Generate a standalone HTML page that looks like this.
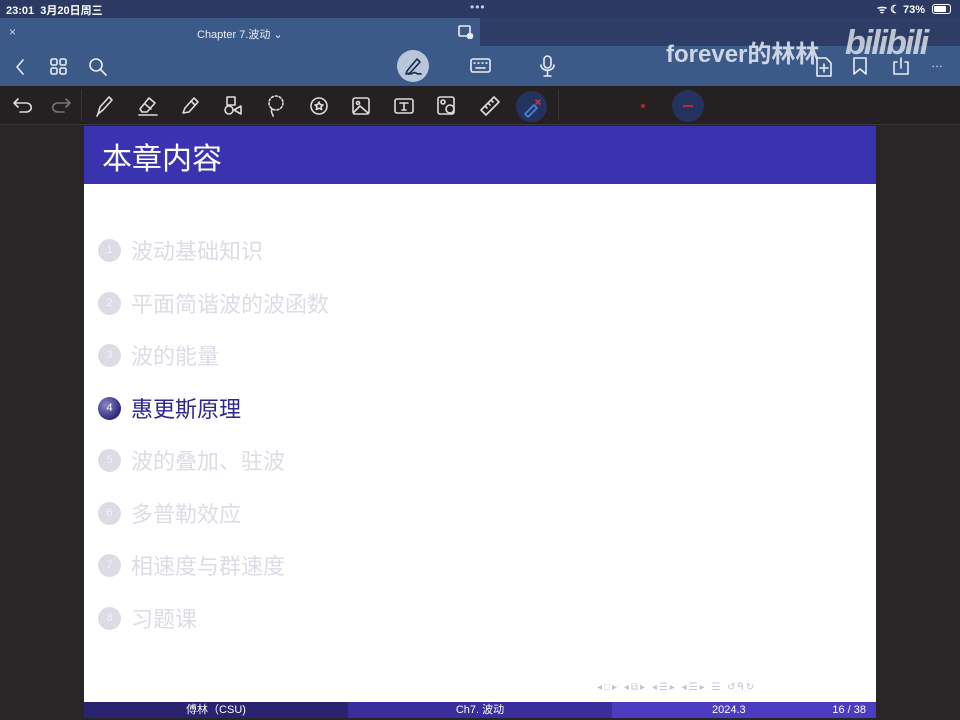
<!DOCTYPE html>
<html><head><meta charset="utf-8"><style>
*{margin:0;padding:0;box-sizing:border-box}
body{width:960px;height:720px;overflow:hidden;background:#2a2627;font-family:"Liberation Sans","Noto Sans CJK SC",sans-serif;position:relative}
.a{position:absolute}
.ic{position:absolute;stroke:#e8ecf4;fill:none;stroke-width:1.6;stroke-linecap:round;stroke-linejoin:round}
.tb{stroke:#dcdcdc}
.item{position:absolute;left:98px;height:28px;display:flex;align-items:center;font-size:22px;color:#dcdce6}
.item .c{width:23px;height:23px;border-radius:50%;background:#dcdce4;color:#f2f2f6;font-size:11px;display:flex;align-items:center;justify-content:center;margin-right:10px}
.item.on{color:#2d2590}
.item.on .c{background:radial-gradient(circle at 35% 35%,#8a86c8,#2d2a78 70%);color:#fff}
</style></head><body>
<div class="a" style="left:0;top:0;width:960px;height:18px;background:#2c3a63"></div>
<div class="a" style="left:6px;top:2px;color:#fff;font-size:11px;font-weight:bold">23:01 &nbsp;3月20日周三</div>
<div class="a" style="left:470px;top:0px;color:#c8cce0;font-size:12px;letter-spacing:1px">•••</div>
<div class="a" style="left:877px;top:2px;color:#fff;font-size:11px;font-weight:bold">ᯤ ☾ 73%</div>
<div class="a" style="left:932px;top:4px;width:19px;height:10px;border:1px solid #fff;border-radius:3px"><div style="width:12px;height:6px;margin:1px;background:#fff;border-radius:1px"></div></div>
<div class="a" style="left:0;top:18px;width:480px;height:28px;background:#3c5a87"></div>
<div class="a" style="left:480px;top:18px;width:480px;height:28px;background:#2e3d66"></div>
<div class="a" style="left:9px;top:25px;color:#c8d2e4;font-size:12px">×</div>
<div class="a" style="left:197px;top:26px;color:#e8ecf4;font-size:11px">Chapter 7.波动 ⌄</div>
<svg class="ic" style="left:458px;top:25px" width="16" height="14" viewBox="0 0 16 14"><rect x="1" y="1" width="11" height="10" rx="1"/><circle cx="12" cy="11" r="2.5" fill="#e8ecf4"/></svg>
<div class="a" style="left:0;top:46px;width:960px;height:40px;background:#3c5a87"></div>
<svg class="ic" style="left:12px;top:58px" width="16" height="18"><path d="M11 2 L5 9 L11 16"/></svg>
<svg class="ic" style="left:50px;top:58px" width="18" height="18"><rect x="1" y="1" width="6" height="6" rx="1.5"/><rect x="10" y="1" width="6" height="6" rx="1.5"/><rect x="1" y="10" width="6" height="6" rx="1.5"/><rect x="10" y="10" width="6" height="6" rx="1.5"/></svg>
<svg class="ic" style="left:88px;top:57px" width="20" height="20"><circle cx="8" cy="8" r="6"/><path d="M12.5 12.5 L18 18"/></svg>
<div class="a" style="left:397px;top:50px;width:32px;height:32px;border-radius:50%;background:#b8c6dc"></div>
<svg class="ic" style="left:402px;top:55px;stroke:#1d2a44" width="22" height="22"><path d="M5 16 L15 4 L18 7 L8 18 L4 19 Z M6 19 C10 20 12 16 14 18 16 20 17 18 19 19"/></svg>
<svg class="ic" style="left:470px;top:58px" width="22" height="16"><rect x="1" y="1" width="19" height="13" rx="2"/><path d="M4 5h1M8 5h1M12 5h1M16 5h1M6 10h9"/></svg>
<svg class="ic" style="left:539px;top:55px" width="18" height="22"><rect x="5" y="1" width="7" height="12" rx="3.5"/><path d="M2 10 C2 17 15 17 15 10 M8.5 16 V21 M5 21 H12"/></svg>
<div class="a" style="left:666px;top:34px;color:#dde3ee;font-size:24px;font-weight:bold;opacity:.9">forever的林林</div>
<div class="a" style="left:845px;top:24px;color:#e2e6ee;font-size:34px;font-weight:bold;font-style:italic;letter-spacing:-2px;opacity:.8">bilibili</div>
<svg class="ic" style="left:815px;top:56px" width="18" height="22"><path d="M2 2h9l5 5v13H2Z M9 8v8M5 12h8"/></svg>
<svg class="ic" style="left:852px;top:56px" width="16" height="20"><path d="M2 2h12v16l-6-5-6 5Z"/></svg>
<svg class="ic" style="left:891px;top:56px" width="20" height="20"><path d="M6 6H3v12h14V6h-3M10 2v10"/></svg>
<div class="a" style="left:931px;top:56px;color:#e8ecf4;font-size:12px">…</div>
<div class="a" style="left:0;top:86px;width:960px;height:39px;background:#252122;border-bottom:1px solid #3a3637"></div>
<div class="a" style="left:81px;top:90px;width:1px;height:31px;background:#3a3637"></div>
<div class="a" style="left:558px;top:90px;width:1px;height:31px;background:#3a3637"></div>
<svg class="ic tb" style="left:12px;top:96px" width="22" height="18"><path d="M6 3 L2 7 L6 11 M2 7 H14 C21 7 21 16 14 16 H8"/></svg>
<svg class="ic tb" style="left:50px;top:96px;stroke:#777" width="22" height="18"><path d="M16 3 L20 7 L16 11 M20 7 H8 C1 7 1 16 8 16 H14"/></svg>
<svg class="ic tb" style="left:94px;top:94px" width="22" height="24"><path d="M4 20 L6 13 L15 3 L18 6 L9 16 Z M4 20 L3 22"/></svg>
<svg class="ic tb" style="left:136px;top:94px" width="24" height="24"><path d="M4 15 L13 4 L19 9 L11 18 H6 Z M9 10 L15 15 M3 21 H21"/></svg>
<svg class="ic tb" style="left:180px;top:94px" width="22" height="24"><path d="M3 19 L5 14 L14 4 L18 8 L9 18 Z M11 7 L15 11"/></svg>
<svg class="ic tb" style="left:222px;top:94px" width="22" height="24"><rect x="5" y="3" width="8" height="8"/><circle cx="7" cy="16" r="4"/><path d="M19 12 L12 16 L19 20 Z"/></svg>
<svg class="ic tb" style="left:265px;top:94px" width="22" height="24"><circle cx="11" cy="9" r="7" stroke-dasharray="2 2"/><path d="M7 15 C5 19 9 21 8 22"/></svg>
<svg class="ic tb" style="left:307px;top:94px" width="24" height="24"><circle cx="12" cy="12" r="8"/><path d="M12 8 l1.2 2.6 2.8.3-2 1.9.6 2.8-2.6-1.4-2.6 1.4.6-2.8-2-1.9 2.8-.3Z"/></svg>
<svg class="ic tb" style="left:350px;top:94px" width="22" height="24"><rect x="3" y="4" width="16" height="16" rx="2"/><circle cx="8" cy="9" r="1.5"/><path d="M4 18 L10 12 L18 19"/></svg>
<svg class="ic tb" style="left:392px;top:94px" width="24" height="24"><rect x="3" y="5" width="18" height="14" rx="2"/><path d="M8 9 H16 M12 9 V16 M10 16 H14"/></svg>
<svg class="ic tb" style="left:435px;top:94px" width="24" height="24"><rect x="3" y="3" width="16" height="17" rx="2"/><circle cx="15" cy="15" r="4"/><circle cx="8" cy="8" r="2"/></svg>
<svg class="ic tb" style="left:478px;top:94px" width="24" height="24"><path d="M3 16 L16 3 L21 8 L8 21 Z M7 12l2 2M10 9l2 2M13 6l2 2"/></svg>
<div class="a" style="left:516px;top:91px;width:31px;height:31px;border-radius:50%;background:#26325e"></div>
<svg class="ic" style="left:520px;top:95px;stroke:#3f8ad8" width="24" height="24"><path d="M5 19 L14 10 L17 13 L8 22 Z"/><path d="M16 5 l4 4 M20 5 l-4 4" stroke="#c0304a"/></svg>
<div class="a" style="left:641px;top:104px;width:4px;height:4px;border-radius:50%;background:#b82030"></div>
<div class="a" style="left:672px;top:90px;width:32px;height:32px;border-radius:50%;background:#26325e"></div>
<div class="a" style="left:683px;top:105px;width:10px;height:2px;background:#b82a3c"></div>
<div class="a" style="left:84px;top:126px;width:792px;height:576px;background:#fff"></div>
<div class="a" style="left:84px;top:126px;width:792px;height:58px;background:#3a33b0"></div>
<div class="a" style="left:102px;top:134px;color:#fff;font-size:30px">本章内容</div>
<div class="item" style="top:236px"><span class="c">1</span>波动基础知识</div>
<div class="item" style="top:289px"><span class="c">2</span>平面简谐波的波函数</div>
<div class="item" style="top:341px"><span class="c">3</span>波的能量</div>
<div class="item on" style="top:394px"><span class="c">4</span>惠更斯原理</div>
<div class="item" style="top:446px"><span class="c">5</span>波的叠加、驻波</div>
<div class="item" style="top:499px"><span class="c">6</span>多普勒效应</div>
<div class="item" style="top:551px"><span class="c">7</span>相速度与群速度</div>
<div class="item" style="top:604px"><span class="c">8</span>习题课</div>
<div class="a" style="left:597px;top:682px;color:#c4c4d8;font-size:10px;letter-spacing:2px">◂□▸ ◂⧉▸ ◂☰▸ ◂☰▸ ☰ ↺ᑫ↻</div>
<div class="a" style="left:84px;top:702px;width:264px;height:16px;background:#2a2370;color:#fff;font-size:11px;text-align:center;line-height:16px">傅林（CSU)</div>
<div class="a" style="left:348px;top:702px;width:264px;height:16px;background:#3a2f9a;color:#fff;font-size:11px;text-align:center;line-height:16px">Ch7. 波动</div>
<div class="a" style="left:612px;top:702px;width:264px;height:16px;background:#4b3cc0;color:#fff;font-size:11px;line-height:16px"><span style="position:absolute;left:100px">2024.3</span><span style="position:absolute;right:10px">16 / 38</span></div>
</body></html>
